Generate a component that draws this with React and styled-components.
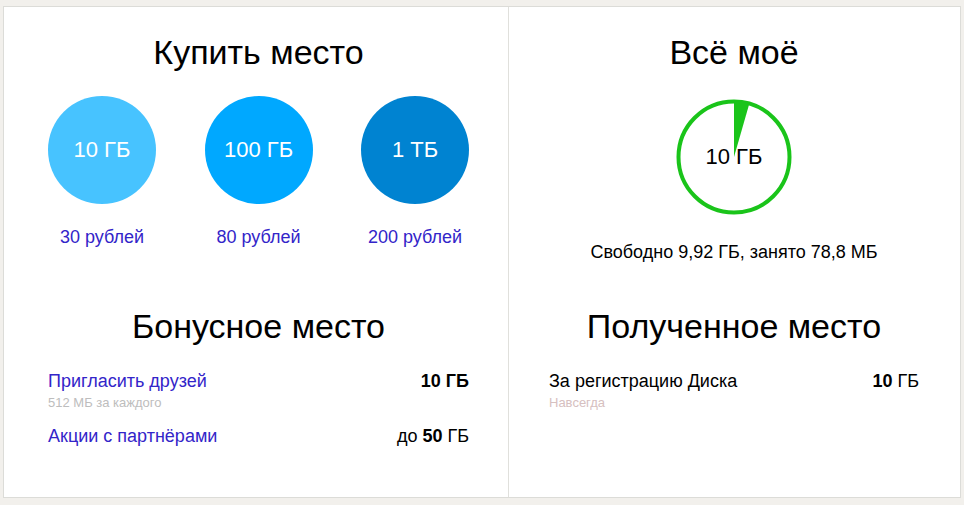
import styled, { createGlobalStyle } from "styled-components";

const Global = createGlobalStyle`
  html, body {
    margin: 0;
    padding: 0;
    background: #f2f0ec;
    font-family: "Liberation Sans", Arial, sans-serif;
  }
`;

const plans = [
  { size: "10 ГБ", price: "30 рублей", color: "#47c3ff" },
  { size: "100 ГБ", price: "80 рублей", color: "#00a8ff" },
  { size: "1 ТБ", price: "200 рублей", color: "#0083d1" },
];

const Page = styled.div`
  padding: 6px 0 0 3px;
`;

const Card = styled.div`
  width: 958px;
  height: 492px;
  box-sizing: border-box;
  background: #fff;
  border: 1px solid #dcdcd8;
  display: grid;
  grid-template-columns: 504px 1fr;
`;

const Column = styled.div`
  box-sizing: border-box;
  padding: 25px ${(p) => p.$right}px 0 ${(p) => p.$left}px;
  border-left: ${(p) => (p.$divider ? "1px solid #e0e0dc" : "none")};
  display: flex;
  flex-direction: column;
`;

const Top = styled.section`
  height: 274px;
  display: flex;
  flex-direction: column;
  align-items: center;
`;

const Title = styled.h2`
  margin: 0;
  font-size: 34px;
  line-height: 40px;
  font-weight: normal;
  color: #000;
  text-align: center;
`;

const Plans = styled.div`
  align-self: stretch;
  display: flex;
  justify-content: space-between;
  margin-top: 24px;
`;

const Plan = styled.div`
  width: 108px;
  display: flex;
  flex-direction: column;
  align-items: center;
`;

const Bubble = styled.div`
  width: 108px;
  height: 108px;
  border-radius: 50%;
  background: ${(p) => p.$color};
  color: #fff;
  font-size: 22px;
  display: flex;
  align-items: center;
  justify-content: center;
`;

const Link = styled.a`
  color: #3325c9;
  font-size: 18px;
  line-height: 22px;
  text-decoration: none;
  cursor: pointer;
  white-space: nowrap;
`;

const Price = styled(Link)`
  margin-top: 22px;
`;

const Ring = styled.div`
  position: relative;
  width: 118px;
  height: 118px;
  margin-top: 26px;
`;

const RingLabel = styled.div`
  position: absolute;
  inset: 0;
  display: flex;
  align-items: center;
  justify-content: center;
  font-size: 22px;
  color: #000;
`;

const Usage = styled.div`
  margin-top: 25px;
  font-size: 18px;
  line-height: 22px;
  color: #000;
`;

const Rows = styled.div`
  margin-top: 24px;
  display: flex;
  flex-direction: column;
  gap: 14px;
`;

const Row = styled.div`
  display: flex;
  justify-content: space-between;
  align-items: flex-start;
`;

const Name = styled.div`
  display: flex;
  flex-direction: column;
  gap: 3px;
`;

const Plain = styled.span`
  font-size: 18px;
  line-height: 22px;
  color: #000;
`;

const Note = styled.span`
  font-size: 13px;
  line-height: 16px;
  color: ${(p) => p.$color || "#bdbdbd"};
`;

const Amount = styled.span`
  font-size: 18px;
  line-height: 22px;
  color: #000;
  white-space: nowrap;
  b {
    font-weight: bold;
  }
`;

const UsageRing = () => {
  const c = 59;
  const r = 55.5;
  const a = (16 * Math.PI) / 180;
  const x = c + r * Math.sin(a);
  const y = c - r * Math.cos(a);
  return (
    <Ring>
      <svg width="118" height="118" viewBox="0 0 118 118">
        <circle cx={c} cy={c} r={r} fill="none" stroke="#1ac41a" strokeWidth="4" />
        <path d={`M${c} ${c} L${c} ${c - r} A${r} ${r} 0 0 1 ${x} ${y} Z`} fill="#1ac41a" />
      </svg>
      <RingLabel>10 ГБ</RingLabel>
    </Ring>
  );
};

const App = () => (
  <Page>
    <Global />
    <Card>
      <Column $left={44} $right={39}>
        <Top>
          <Title>Купить место</Title>
          <Plans>
            {plans.map((p) => (
              <Plan key={p.size}>
                <Bubble $color={p.color}>{p.size}</Bubble>
                <Price>{p.price}</Price>
              </Plan>
            ))}
          </Plans>
        </Top>
        <Title>Бонусное место</Title>
        <Rows>
          <Row>
            <Name>
              <Link>Пригласить друзей</Link>
              <Note>512 МБ за каждого</Note>
            </Name>
            <Amount><b>10 ГБ</b></Amount>
          </Row>
          <Row>
            <Name>
              <Link>Акции с партнёрами</Link>
            </Name>
            <Amount>до <b>50</b> ГБ</Amount>
          </Row>
        </Rows>
      </Column>
      <Column $divider $left={40} $right={41}>
        <Top>
          <Title>Всё моё</Title>
          <UsageRing />
          <Usage>Свободно 9,92 ГБ, занято 78,8 МБ</Usage>
        </Top>
        <Title>Полученное место</Title>
        <Rows>
          <Row>
            <Name>
              <Plain>За регистрацию Диска</Plain>
              <Note $color="#d6c0c0">Навсегда</Note>
            </Name>
            <Amount><b>10</b> ГБ</Amount>
          </Row>
        </Rows>
      </Column>
    </Card>
  </Page>
);

export default App;
